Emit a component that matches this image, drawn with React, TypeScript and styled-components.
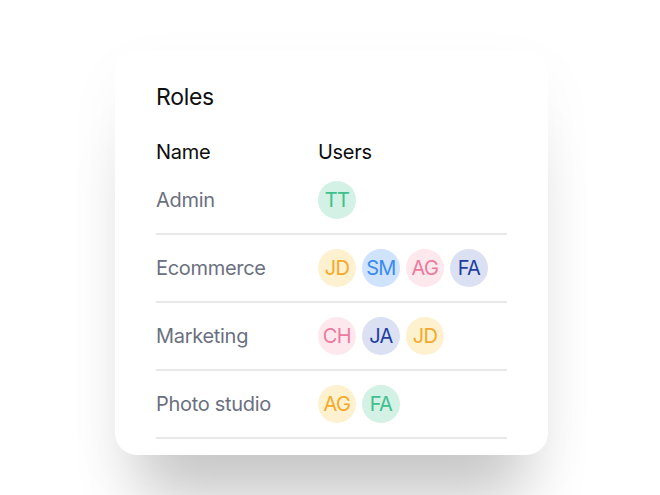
import React from "react";
import styled, { createGlobalStyle } from "styled-components";

const Global = createGlobalStyle`
  html, body { margin: 0; padding: 0; background: #ffffff; }
  body { font-family: Inter, "Noto Sans", sans-serif; -webkit-font-smoothing: antialiased; }
`;

const Page = styled.div`
  width: 660px;
  height: 495px;
  overflow: hidden;
  padding: 50px 0 0 115px;
  box-sizing: border-box;
`;

const Card = styled.div`
  width: 433px;
  height: 405px;
  box-sizing: border-box;
  background: #fff;
  border-radius: 22px;
  padding: 33px 41px 0 41px;
  box-shadow: 0 70px 60px -25px rgba(0, 0, 0, 0.2), 0 20px 60px rgba(0, 0, 0, 0.04);
`;

const Title = styled.h2`
  margin: 0;
  font-size: 23px;
  font-weight: 400;
  color: #111;
  line-height: 28px;
  letter-spacing: -0.3px;
`;

const Table = styled.div`
  margin-top: 29px;
  display: flex;
  flex-direction: column;
`;

const HeaderRow = styled.div`
  display: grid;
  grid-template-columns: 162px 1fr;
  font-size: 20px;
  font-weight: 400;
  color: #0d0d0d;
  line-height: 24px;
  letter-spacing: -0.3px;
  margin-bottom: 3px;
`;

const Row = styled.div`
  display: grid;
  grid-template-columns: 162px 1fr;
  align-items: center;
  padding: 14px 0;
  border-bottom: 2px solid #e6e8eb;
`;

const RoleName = styled.div`
  font-size: 20px;
  font-weight: 400;
  color: #6b7080;
  letter-spacing: -0.3px;
`;

const Avatars = styled.div`
  display: flex;
  gap: 6px;
`;

const Avatar = styled.div<{ $bg: string; $fg: string }>`
  width: 38px;
  height: 38px;
  border-radius: 50%;
  background: ${(p) => p.$bg};
  color: ${(p) => p.$fg};
  display: flex;
  align-items: center;
  justify-content: center;
  font-size: 20px;
  letter-spacing: -0.6px;
`;

const palette: Record<string, [string, string]> = {
  green: ["#d3f1e4", "#3fc08d"],
  yellow: ["#fdf1cf", "#f4a92c"],
  blue: ["#cfe3fc", "#3b8bee"],
  pink: ["#fde8ee", "#ec7a9e"],
  navy: ["#dbe1f2", "#1f3f9f"],
};

const rows: { name: string; users: [string, string][] }[] = [
  { name: "Admin", users: [["TT", "green"]] },
  {
    name: "Ecommerce",
    users: [
      ["JD", "yellow"],
      ["SM", "blue"],
      ["AG", "pink"],
      ["FA", "navy"],
    ],
  },
  {
    name: "Marketing",
    users: [
      ["CH", "pink"],
      ["JA", "navy"],
      ["JD", "yellow"],
    ],
  },
  {
    name: "Photo studio",
    users: [
      ["AG", "yellow"],
      ["FA", "green"],
    ],
  },
];

export default function App() {
  return (
    <Page>
      <Global />
      <Card>
        <Title>Roles</Title>
        <Table>
          <HeaderRow>
            <div>Name</div>
            <div>Users</div>
          </HeaderRow>
          {rows.map((r) => (
            <Row key={r.name}>
              <RoleName>{r.name}</RoleName>
              <Avatars>
                {r.users.map(([initials, c], i) => (
                  <Avatar key={i} $bg={palette[c][0]} $fg={palette[c][1]}>
                    {initials}
                  </Avatar>
                ))}
              </Avatars>
            </Row>
          ))}
        </Table>
      </Card>
    </Page>
  );
}
